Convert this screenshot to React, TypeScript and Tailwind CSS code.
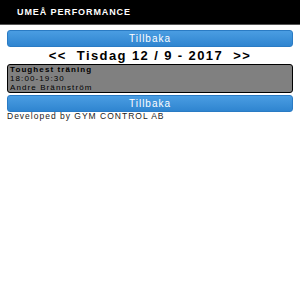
export default function App() {
  return (
    <div className="w-[300px] h-[286px] bg-white font-['Liberation_Sans',Arial,sans-serif]">
      <header className="h-[25px] bg-black border-b border-[#555] flex items-center pl-[17px]">
        <span className="text-white text-[9px] font-black tracking-[0.9px] leading-none">UMEÅ PERFORMANCE</span>
      </header>

      <div className="px-[7px] pt-[5px]">
        <button className="w-full h-[17px] rounded-[3px] bg-gradient-to-b from-[#4a9de2] to-[#2f85d0] border border-[#2a7bc4] text-white text-[10px] tracking-[1px] leading-none flex items-center justify-center">
          Tillbaka
        </button>

        <div className="h-[16px] pt-[1px] flex items-center justify-center font-bold text-[13px] tracking-[1.4px] leading-none text-black whitespace-pre">
          {'<<  Tisdag 12 / 9 - 2017  >>'}
        </div>

        <div className="mt-[1px] h-[29px] rounded-[3px] border border-black bg-[#808080] px-[2px] text-[8px] tracking-[1.1px] leading-[9px] text-black">
          <div className="font-bold">Toughest träning</div>
          <div>18:00-19:30</div>
          <div>Andre Brännström</div>
        </div>

        <button className="mt-[2px] w-full h-[17px] rounded-[3px] bg-gradient-to-b from-[#4a9de2] to-[#2f85d0] border border-[#2a7bc4] text-white text-[10px] tracking-[1px] leading-none flex items-center justify-center">
          Tillbaka
        </button>

        <div className="text-[8.5px] tracking-[1px] leading-[9px] text-[#222]">Developed by GYM CONTROL AB</div>
      </div>
    </div>
  )
}
